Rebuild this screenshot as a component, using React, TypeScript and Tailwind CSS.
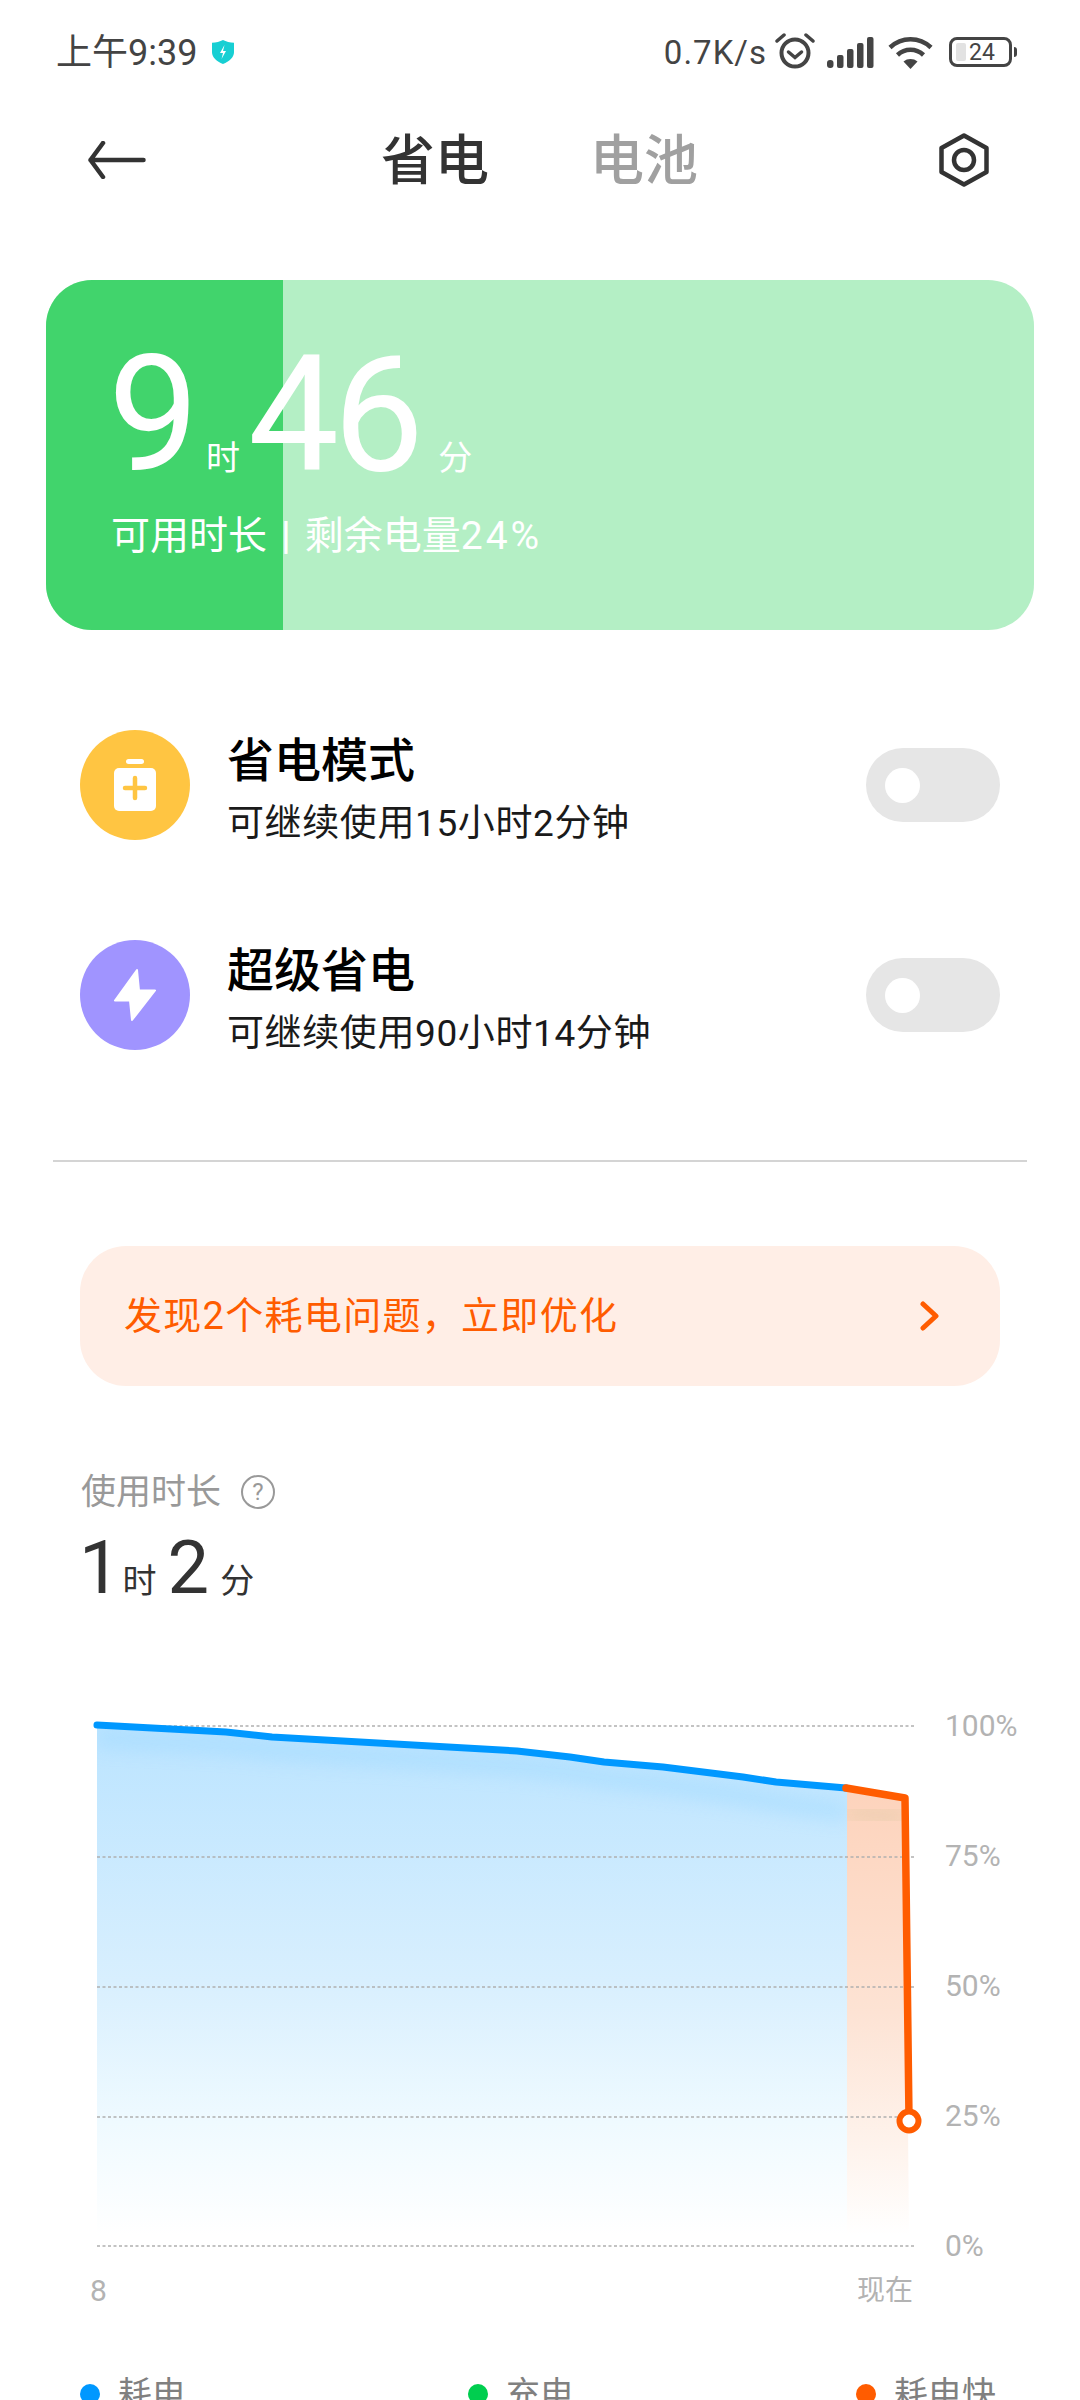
import React from 'react';

const AlarmIcon = () => (
  <svg width="40" height="38" viewBox="0 0 40 38" fill="none" stroke="#444" strokeLinecap="round">
    <circle cx="20" cy="21" r="13.5" strokeWidth="4" />
    <path d="M13.5 20l6.5 5.5 6.5-5.5" strokeWidth="3.5" />
    <path d="M2 9l7-6M38 9l-7-6" strokeWidth="3.5" />
  </svg>
);

const SignalIcon = () => (
  <svg width="47" height="31" viewBox="0 0 47 31" fill="#444">
    <rect x="0" y="23" width="6.5" height="8" rx="3" />
    <rect x="10" y="18" width="6.5" height="13" rx="2" />
    <rect x="20" y="12" width="6.5" height="19" rx="2" />
    <rect x="30" y="6" width="6.5" height="25" rx="2" />
    <rect x="40" y="0" width="6.5" height="31" rx="2" />
  </svg>
);

const WifiIcon = () => (
  <svg width="45" height="33" viewBox="0 0 45 33" fill="none" stroke="#444" strokeWidth="4.5">
    <path d="M2 11.5C13.5 0.5 31.5 0.5 43 11.5" />
    <path d="M9.5 19C17 12 28 12 35.5 19" />
    <path d="M22.5 33l-7-7.5c4-3.3 10-3.3 14 0z" fill="#444" stroke="none" />
  </svg>
);

const BatteryIcon = () => (
  <div className="flex items-center">
    <div className="relative flex h-[30px] w-[63px] items-center rounded-[8px] border-[3px] border-[#444]">
      <div className="ml-[4px] h-[18px] w-[10px] rounded-[2px] bg-[#e2e2e2]" />
      <span className="ml-[3px] text-[23px] leading-none text-[#444]">24</span>
    </div>
    <div className="ml-[2px] h-[10px] w-[3px] rounded-r-full bg-[#444]" />
  </div>
);

const ShieldIcon = () => (
  <svg width="24" height="24" viewBox="0 0 24 24">
    <path d="M12 0c3 1.6 7 2.6 11 2.8v9.5c0 5-4.6 9.2-11 11.7C5.6 21.500 1 17.300 1 12.300V2.800C5 2.600 9 1.600 12 0z" fill="#17cfd3" />
    <path d="M13.500 5l-4.500 8h3l-1.500 6 4.500-8h-3z" fill="#fff" />
  </svg>
);

const Toggle = () => (
  <div className="flex h-[74px] w-[134px] items-center rounded-full bg-[#e6e6e6] pl-[19px]">
    <div className="h-[35px] w-[35px] rounded-full bg-white" />
  </div>
);

const ModeRow = ({ icon, color, title, sub }: { icon: React.ReactNode; color: string; title: string; sub: string }) => (
  <div className="flex h-[210px] items-center pl-[80px] pr-[80px]">
    <div className={`flex h-[110px] w-[110px] shrink-0 items-center justify-center rounded-full ${color}`}>{icon}</div>
    <div className="ml-[37px] flex-1 pt-[10px]">
      <div className="text-[47px] leading-[56px] font-medium text-black">{title}</div>
      <div className="mt-[12px] text-[37px] leading-[46px] tracking-[0.6px] text-[#1a1a1a]">{sub}</div>
    </div>
    <Toggle />
  </div>
);

const linePoints = '97,1725 226,1732 272,1737 517,1751 570,1757 604,1762 663,1767 743,1777 776,1782 846,1788';

const Chart = () => (
  <svg width="930" height="600" viewBox="0 1661 930 600" className="shrink-0">
    <defs>
      <linearGradient id="blueFill" x1="0" y1="1725" x2="0" y2="2235" gradientUnits="userSpaceOnUse">
        <stop offset="0" stopColor="#bbe4ff" />
        <stop offset="0.5" stopColor="#d8effe" />
        <stop offset="0.78" stopColor="#effaff" />
        <stop offset="1" stopColor="#ffffff" />
      </linearGradient>
      <linearGradient id="orangeFill" x1="0" y1="1790" x2="0" y2="2235" gradientUnits="userSpaceOnUse">
        <stop offset="0" stopColor="#fdd3bc" />
        <stop offset="0.5" stopColor="#fde3d4" />
        <stop offset="0.8" stopColor="#fef3ec" />
        <stop offset="1" stopColor="#ffffff" />
      </linearGradient>
      <filter id="soft" x="-5%" y="-50%" width="110%" height="200%">
        <feGaussianBlur stdDeviation="9" />
      </filter>
      <clipPath id="blueClip">
        <polygon points={`${linePoints} 847,1788 847,2240 97,2240`} />
      </clipPath>
      <clipPath id="orangeClip">
        <polygon points="847,1788 905,1798 909,2240 847,2240" />
      </clipPath>
    </defs>

    <polygon points={`${linePoints} 848,1788 848,2235 97,2235`} fill="url(#blueFill)" />
    <polygon points="847,1788 905,1798 909,2235 847,2235" fill="url(#orangeFill)" />

    {/* darker soft band under the curve */}
    <g clipPath="url(#blueClip)">
      <polyline points="97,1738 226,1745 272,1750 517,1766 570,1772 604,1778 663,1784 743,1796 776,1802 846,1812" fill="none" stroke="#9fd9ff" strokeWidth="16" opacity="0.55" filter="url(#soft)" />
    </g>
    <g clipPath="url(#orangeClip)">
      <polyline points="847,1812 905,1818" fill="none" stroke="#dcc7a0" strokeWidth="18" opacity="0.4" filter="url(#soft)" />
      <line x1="905" y1="1800" x2="905" y2="2120" stroke="#d9d2b0" strokeWidth="12" opacity="0.3" filter="url(#soft)" />
    </g>

    {[1726, 1857, 1987, 2117, 2246].map((y) => (
      <line key={y} x1="97" x2="914" y1={y} y2={y} stroke="#b0b0b0" strokeWidth="1.500" strokeDasharray="3 2.500" />
    ))}

    <polyline points={linePoints} fill="none" stroke="#0098ff" strokeWidth="7" strokeLinecap="round" strokeLinejoin="round" />
    <polyline points="846,1788 905,1798 909,2118" fill="none" stroke="#ff5c00" strokeWidth="7.500" strokeLinecap="round" strokeLinejoin="round" />
    <circle cx="909" cy="2121" r="9.500" fill="#fff" stroke="#ff5c00" strokeWidth="6" />
  </svg>
);

const Legend = ({ color, label, className }: { color: string; label: string; className: string }) => (
  <div className={`flex items-center ${className}`}>
    <div className={`h-[20px] w-[20px] rounded-full ${color}`} />
    <span className="ml-[18px] text-[34px] leading-[44px] text-[#808080]">{label}</span>
  </div>
);

export default function App() {
  return (
    <div className="h-[2400px] w-[1080px] overflow-hidden bg-white font-['Roboto','Noto_Sans_CJK_SC',sans-serif]">
      {/* status bar */}
      <div className="flex h-[104px] items-center pl-[56px] pr-[63px] text-[#444]">
        <span className="mt-[2px] text-[36px] leading-none">上午9:39</span>
        <div className="ml-[14px]"><ShieldIcon /></div>
        <span className="ml-auto text-[33px] leading-none tracking-[1px]">0.7K/s</span>
        <div className="ml-[8px] -mt-[2px]"><AlarmIcon /></div>
        <div className="ml-[12px]"><SignalIcon /></div>
        <div className="ml-[14px]"><WifiIcon /></div>
        <div className="ml-[16px]"><BatteryIcon /></div>
      </div>

      {/* header */}
      <div className="flex h-[112px] items-center pl-[88px] pr-[91px]">
        <svg width="58" height="38" viewBox="0 0 58 38" fill="none" stroke="#333" strokeWidth="4.500" strokeLinecap="round" strokeLinejoin="round" className="shrink-0">
          <path d="M55.500 19H2.500M15 2L2.500 19 15 36" />
        </svg>
        <span className="ml-[235px] mt-[4px] text-[54px] leading-none font-medium text-[#333]">省电</span>
        <span className="ml-[101px] mt-[4px] text-[54px] leading-none font-medium text-[#a0a0a0]">电池</span>
        <svg width="50" height="54" viewBox="0 0 50 54" fill="none" stroke="#333" strokeWidth="4.500" strokeLinejoin="round" className="ml-auto shrink-0">
          <path d="M25 2.500L47.500 15v24L25 51.500 2.500 39V15z" />
          <circle cx="25" cy="27" r="10" />
        </svg>
      </div>

      {/* remaining time card */}
      <div className="relative mx-[46px] mt-[64px] h-[350px] overflow-hidden rounded-[46px] bg-[#b4efc5]">
        <div className="absolute inset-y-0 left-0 w-[237px] bg-[#41d46c]" />
        <div className="relative pl-[62px] pt-[54px] text-white">
          <div className="flex h-[162px] items-baseline">
            <span className="text-[162px] leading-[162px] tracking-[-3px]">9</span>
            <span className="ml-[10px] text-[34px] leading-none">时</span>
            <span className="ml-[8px] text-[162px] leading-[162px] tracking-[-6px]">46</span>
            <span className="ml-[20px] text-[34px] leading-none">分</span>
          </div>
          <div className="ml-[3px] mt-[17px] flex text-[39px] leading-[46px]">
            <span>可用时长</span>
            <span className="mx-[14px] font-medium">|</span>
            <span>剩余电量</span>
            <span className="tracking-[3px]">24%</span>
          </div>
        </div>
      </div>

      <div className="mt-[50px]">
        <ModeRow
          color="bg-[#ffc542]"
          title="省电模式"
          sub="可继续使用15小时2分钟"
          icon={
            <svg width="42" height="52" viewBox="0 0 42 52">
              <rect x="12" y="0" width="18" height="5" rx="2.500" fill="#fff" />
              <rect x="0" y="9" width="42" height="43" rx="5" fill="#fff" />
              <path d="M21 19v20M11 29h20" stroke="#ffc542" strokeWidth="4.500" strokeLinecap="round" />
            </svg>
          }
        />
        <ModeRow
          color="bg-[#a094ff]"
          title="超级省电"
          sub="可继续使用90小时14分钟"
          icon={
            <svg width="44" height="54" viewBox="0 0 44 54">
              <path d="M24 2L2 32.500h15L19 52 42 22.500H26z" fill="#fff" stroke="#fff" strokeWidth="2" strokeLinejoin="round" />
            </svg>
          }
        />
      </div>

      <div className="mx-[53px] mt-[60px] h-[2px] bg-[#d4d4d4]" />

      {/* issue banner */}
      <div className="mx-[80px] mt-[84px] flex h-[140px] items-center rounded-[46px] bg-[#ffeee6] pl-[44px] pr-[60px]">
        <span className="text-[38px] leading-none tracking-[1.3px] text-[#ff5c00]">发现2个耗电问题，立即优化</span>
        <svg width="20" height="30" viewBox="0 0 20 30" fill="none" stroke="#ff5c00" strokeWidth="5" strokeLinecap="round" strokeLinejoin="round" className="ml-auto">
          <path d="M3 3l13 12L3 27" />
        </svg>
      </div>

      {/* usage */}
      <div className="ml-[81px] mt-[88px] flex h-[36px] items-center">
        <span className="text-[35px] leading-none text-[#999]">使用时长</span>
        <div className="ml-[20px] flex h-[34px] w-[34px] items-center justify-center rounded-full border-[2px] border-[#999] text-[24px] leading-none text-[#999]">?</div>
      </div>
      <div className="ml-[79px] mt-[18px] flex h-[80px] items-baseline text-[#333]">
        <span className="text-[74px] leading-[80px]">1</span>
        <span className="ml-[2px] text-[34px] leading-none">时</span>
        <span className="ml-[11px] text-[74px] leading-[80px]">2</span>
        <span className="ml-[11px] text-[34px] leading-none">分</span>
      </div>

      {/* chart */}
      <div className="mt-[53px] flex">
        <Chart />
        <div className="ml-[15px] h-[600px]">
          {['100%', '75%', '50%', '25%', '0%'].map((t) => (
            <div key={t} className="flex h-[130px] items-center text-[30px] leading-none text-[#b3b3b3]">{t}</div>
          ))}
        </div>
      </div>
      <div className="mt-[15px] flex w-[913px] justify-between pl-[90px] text-[#b3b3b3]">
        <span className="text-[30px] leading-[30px]">8</span>
        <span className="text-[28px] leading-[30px]">现在</span>
      </div>

      <div className="mt-[66px] flex pl-[80px]">
        <Legend color="bg-[#0098ff]" label="耗电" className="w-[388px]" />
        <Legend color="bg-[#00ce4f]" label="充电" className="w-[388px]" />
        <Legend color="bg-[#ff5c00]" label="耗电快" className="w-[188px]" />
      </div>
    </div>
  );
}
